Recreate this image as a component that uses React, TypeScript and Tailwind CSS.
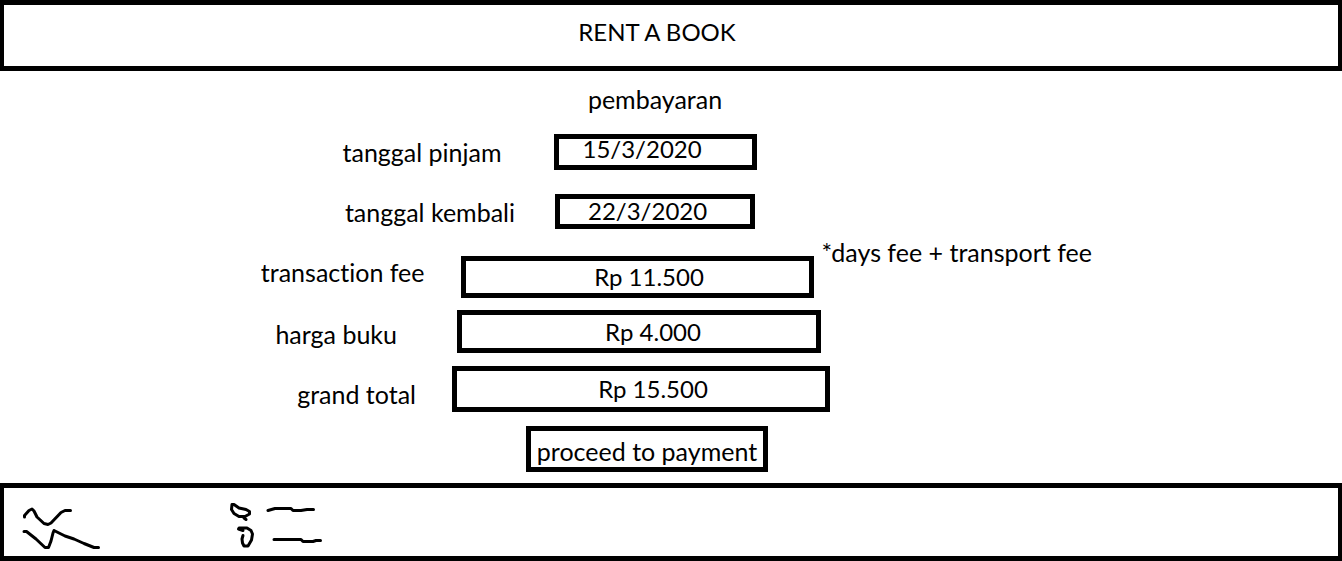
import React from "react";

const label =
  "justify-self-end text-[25px] leading-8 whitespace-nowrap [font-variant-ligatures:none]";
const amount = "flex items-center justify-center border-5 border-black leading-8";
const dateInput = "w-full border-5 border-black bg-white leading-6 outline-none";

export default function App() {
  return (
    <div className="flex min-h-screen flex-col bg-white font-['Lato','Noto_Sans',sans-serif] text-[24px] text-black">
      <header className="flex h-[71px] items-center justify-center border-x-4 border-y-5 border-black pr-7 pb-2">
        <h1 className="leading-8">RENT A BOOK</h1>
      </header>

      <main className="flex-1">
        <h2 className="mt-3 pr-8 text-center text-[25px] leading-8">pembayaran</h2>

        <form onSubmit={(e) => e.preventDefault()}>
          <div className="mt-[19px] grid grid-cols-[1fr_203px_1fr] pr-8">
            <label htmlFor="pinjam" className={`${label} pt-0.5 pr-13`}>
              tanggal pinjam
            </label>
            <input
              id="pinjam"
              type="text"
              defaultValue="15/3/2020"
              className={`${dateInput} h-9 pb-2 pl-6`}
            />
          </div>

          <div className="mt-6 grid grid-cols-[1fr_200px_1fr] pr-8">
            <label htmlFor="kembali" className={`${label} pt-0.5 pr-10`}>
              tanggal kembali
            </label>
            <input
              id="kembali"
              type="text"
              defaultValue="22/3/2020"
              className={`${dateInput} h-[35px] pb-0.5 pl-7`}
            />
          </div>

          <div className="mt-[27px] grid h-[41px] grid-cols-[1fr_353px_1fr] pr-17">
            <label htmlFor="fee" className={`${label} pr-9`}>
              transaction fee
            </label>
            <output id="fee" className={`${amount} pl-6`}>
              Rp 11.500
            </output>
            <p className="-mt-5 pl-2 text-[25px] leading-8 whitespace-nowrap">
              *days fee + transport fee
            </p>
          </div>

          <div className="mt-[13px] grid h-[43px] grid-cols-[1fr_364px_1fr] pr-16">
            <label htmlFor="harga" className={`${label} pt-2 pr-15`}>
              harga buku
            </label>
            <output id="harga" className={`${amount} pl-7`}>
              Rp 4.000
            </output>
          </div>

          <div className="mt-[13px] grid h-[46px] grid-cols-[1fr_378px_1fr] pr-15">
            <label htmlFor="total" className={`${label} pt-3 pr-9`}>
              grand total
            </label>
            <output id="total" className={`${amount} pl-6`}>
              Rp 15.500
            </output>
          </div>

          <div className="mt-[14px] flex justify-center pr-12">
            <button
              type="submit"
              className="h-[46px] w-[242px] border-5 border-black pt-1 text-[25px] leading-8 whitespace-nowrap"
            >
              proceed to payment
            </button>
          </div>
        </form>
      </main>

      <footer className="mt-[11px] flex h-[78px] border-x-4 border-y-5 border-black">
        <svg
          width="330"
          height="68"
          viewBox="4 488 330 68"
          fill="none"
          stroke="#000"
          strokeWidth="3"
          strokeLinecap="round"
          strokeLinejoin="round"
          aria-hidden="true"
        >
          <path d="M24.500 517V515.500L29 510.500L32 509L34 511L37 517L44 523.500L48 524.500L51 523L61 512.500L65 510.500H70.500" />
          <path d="M24 531.500H26.500L36 539L45 547.500H48.500L51 541L53 533L54 530.500L65 536L74 539L84 543.500L94 547.500H98.500" />
          <path d="M232 504.500L231.500 509.500L234 513.500L239 516.500L245 516.500L249.500 514L249.500 511.500L246 509.500L239 508L234 504.500ZM244 518L246 519.500" />
          <path d="M238.500 529L243 530.500M239 528H247L251 530.500L252.500 534L251.500 540L248 546H244L242.500 543L242 539L243 535.500" />
          <path d="M268 510.500L275 508.500H291L293 510.500H301L307 509.500H313.500" />
          <path d="M274 539.500H301L303 541.500H313L316 540.500H320.500" />
        </svg>
      </footer>
    </div>
  );
}
